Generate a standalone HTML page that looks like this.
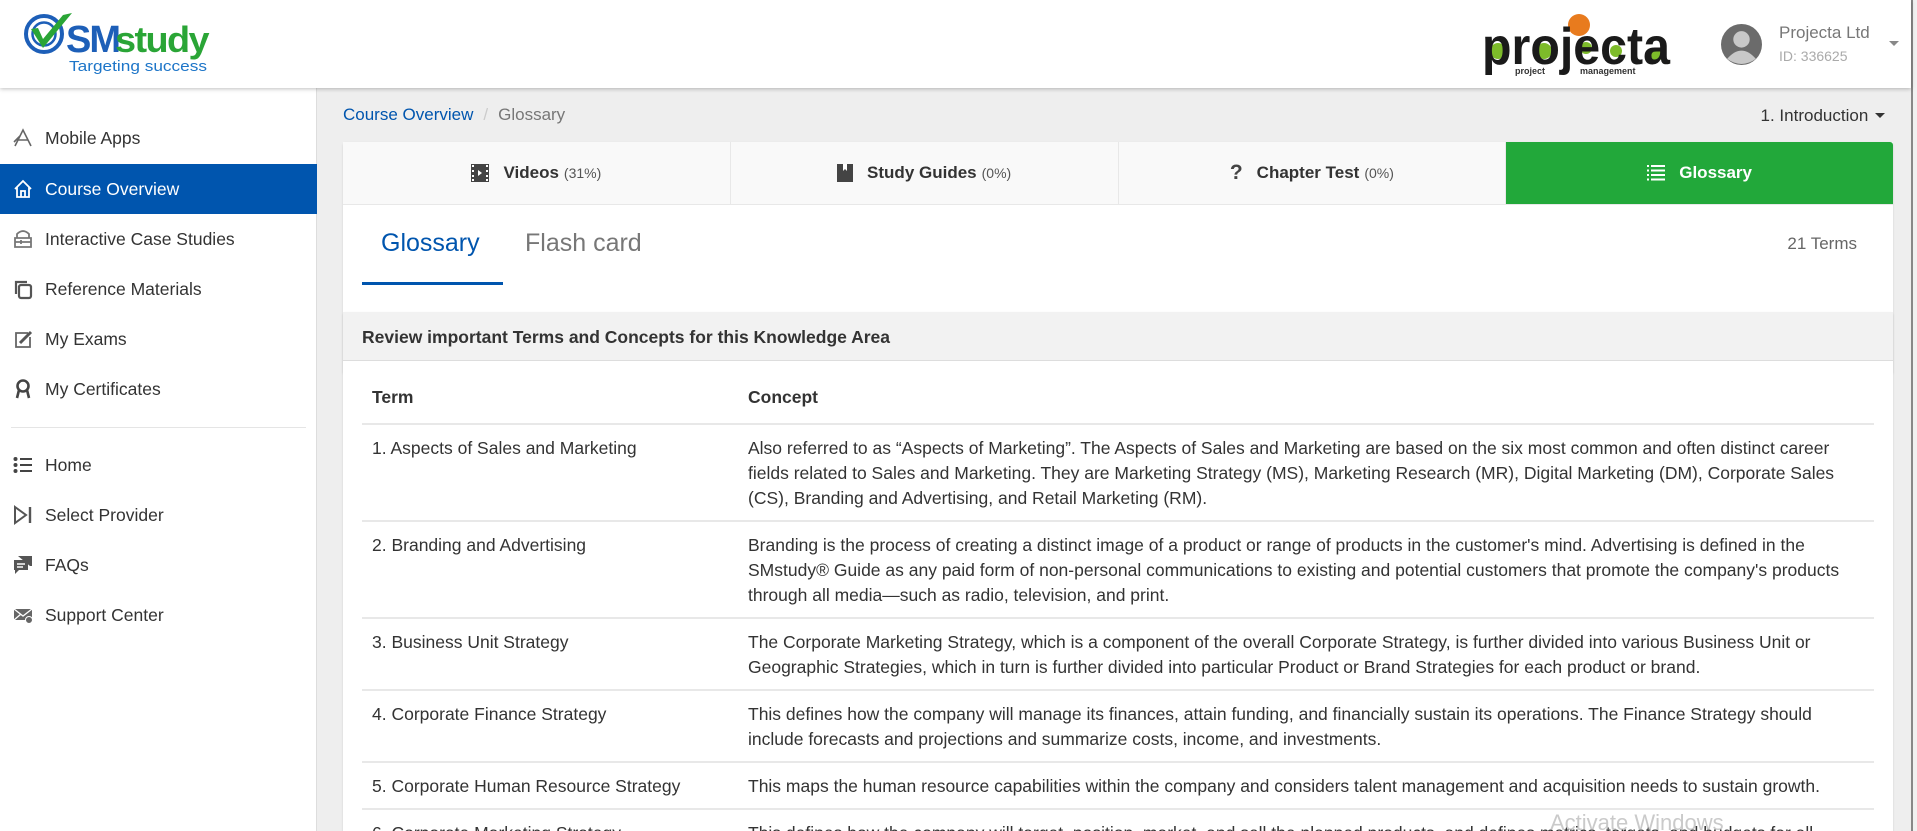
<!DOCTYPE html>
<html style="width:1917px;height:831px;overflow:hidden"><head><meta charset="utf-8"><style>
*{box-sizing:border-box;margin:0;padding:0}
body{width:1917px;height:831px;overflow:hidden;font-family:"Liberation Sans",Arial,sans-serif;background:#eee;color:#333;position:relative}
#wrap{position:absolute;left:0;top:0;width:1917px;height:831px;overflow:hidden}
.hdr{position:absolute;left:0;top:0;width:1911px;height:88px;background:#fff;box-shadow:0 1px 4px rgba(0,0,0,.25);z-index:3}
.side{position:absolute;left:0;top:88px;width:317px;height:743px;background:#fff;border-right:1px solid #ddd}
.side .it{position:absolute;left:0;width:317px;height:50px;display:flex;align-items:center;font-size:17.5px;color:#333}
.side .it svg{position:absolute;left:12px;width:22px;height:22px}
.side .it span{position:absolute;left:45px}
.side .act{background:#0055ae;color:#fff}
.main{position:absolute;left:318px;top:88px;width:1593px;height:743px;overflow:hidden}
.scroll{position:absolute;right:0;top:0;width:6px;height:831px;background:#f1f1f1;border-left:2px solid #888}
.card{position:absolute;left:25px;width:1550px;background:#fff;box-shadow:0 1px 2px rgba(0,0,0,.12);border-radius:3px}
.tabs{display:flex;height:63px;background:#f9f9f9;border-bottom:1px solid #e8e8e8}
.tab{flex:1;display:flex;align-items:center;justify-content:center;font-size:17px;font-weight:bold;color:#333;border-right:1px solid #e8e8e8}
.tab small{font-weight:normal;font-size:14px;color:#555;margin-left:5px}
.tab svg{margin-right:14px}
.tab.g{background:#22a83a;color:#fff;border:none;border-radius:0 3px 0 0}
td{vertical-align:top;font-size:17.5px;line-height:25px;color:#333;padding:11px 10px 9px}
table{border-collapse:collapse;width:1512px;margin-left:19px}
tr+tr td{border-top:2px solid #e8e8e8}
</style></head><body><div id="wrap">
<div class="hdr">
 <svg style="position:absolute;left:22px;top:10px" width="200" height="66" viewBox="0 0 200 66">
  <circle cx="22" cy="24" r="18" fill="none" stroke="#1d5fb8" stroke-width="4"/>
  <circle cx="22" cy="24" r="11.5" fill="none" stroke="#1d5fb8" stroke-width="2.5"/>
  <path d="M9 19 L21 38 L50 3 L41 5 L21 29 L16 18Z" fill="#2aa536"/>
  <text x="44" y="42" font-family="Liberation Sans" font-weight="bold" font-size="38" fill="#1d5fb8" letter-spacing="-2">SM</text>
  <text x="93" y="42" font-family="Liberation Sans" font-weight="bold" font-size="36" fill="#2aa536" letter-spacing="-1.5" textLength="93" lengthAdjust="spacingAndGlyphs">study</text>
  <text x="47" y="61" font-family="Liberation Sans" font-size="15" fill="#1d75c8" textLength="138" lengthAdjust="spacingAndGlyphs">Targeting success</text>
 </svg>
 <svg style="position:absolute;left:1480px;top:10px" width="200" height="66" viewBox="0 0 200 66">
  <circle cx="18" cy="41" r="8" fill="#7dbb2a"/>
  <circle cx="64" cy="41" r="8" fill="#7dbb2a"/>
  <circle cx="106" cy="38" r="6" fill="#7dbb2a"/>
  <circle cx="136" cy="41" r="6" fill="#7dbb2a"/>
  <circle cx="177" cy="45" r="6" fill="#7dbb2a"/>
  <circle cx="99" cy="15" r="11" fill="#e87b1e"/>
  <text x="2" y="54" font-family="Liberation Sans" font-weight="bold" font-size="52" fill="#1a1a1a" textLength="188" lengthAdjust="spacingAndGlyphs">projecta</text>
  <text x="35" y="64" font-family="Liberation Sans" font-weight="bold" font-size="9" fill="#333">project</text>
  <text x="100" y="64" font-family="Liberation Sans" font-weight="bold" font-size="9" fill="#333">management</text>
 </svg>
 <svg style="position:absolute;left:1721px;top:24px" width="41" height="41" viewBox="0 0 40 40"><circle cx="20" cy="20" r="20" fill="#6b6b6b"/><circle cx="20" cy="15" r="8" fill="#c8c8c8"/><path d="M6 34 Q20 18 34 34 Q20 44 6 34Z" fill="#c8c8c8"/></svg>
 <div style="position:absolute;left:1779px;top:23px;font-size:17px;color:#777">Projecta Ltd</div>
 <div style="position:absolute;left:1779px;top:48px;font-size:14px;color:#aaa">ID: 336625</div>
 <div style="position:absolute;left:1889px;top:41px;border:5px solid transparent;border-top-color:#888"></div>
</div>
<div class="side">
 <div class="it" style="top:25px"><svg viewBox="0 0 22 22"><path d="M3 19 L11 3 L19 19 M6 13 H16 M2 15 L8 9" stroke="#666" stroke-width="1.6" fill="none"/></svg><span>Mobile Apps</span></div>
 <div class="it act" style="top:76px"><svg viewBox="0 0 22 22"><path d="M3 11 L11 3 L19 11 M5 9 V19 H17 V9 M9 19 V13 H13 V19" stroke="#fff" stroke-width="1.8" fill="none"/></svg><span>Course Overview</span></div>
 <div class="it" style="top:126px"><svg viewBox="0 0 22 22"><path d="M5 10 V6 Q11 0 17 6 V10 M3 10 H19 V19 H3Z M3 14 H19 M9 12 V16" stroke="#777" stroke-width="1.8" fill="none"/></svg><span>Interactive Case Studies</span></div>
 <div class="it" style="top:176px"><svg viewBox="0 0 22 22"><rect x="7" y="7" width="12" height="13" rx="2" stroke="#555" stroke-width="2.2" fill="none"/><path d="M4 16 V4 H15" stroke="#555" stroke-width="2.2" fill="none"/></svg><span>Reference Materials</span></div>
 <div class="it" style="top:226px"><svg viewBox="0 0 22 22"><path d="M16 5 H4 V19 H18 V9" stroke="#666" stroke-width="1.8" fill="none"/><path d="M8 15 L19 4" stroke="#555" stroke-width="3"/></svg><span>My Exams</span></div>
 <div class="it" style="top:276px"><svg viewBox="0 0 22 22"><circle cx="11" cy="8" r="5.5" stroke="#444" stroke-width="2.6" fill="none"/><path d="M7 12 L5 20 M15 12 L17 20" stroke="#444" stroke-width="2.6"/></svg><span>My Certificates</span></div>
 <div style="position:absolute;left:11px;top:339px;width:295px;height:1px;background:#e5e5e5"></div>
 <div class="it" style="top:352px"><svg viewBox="0 0 22 22"><path d="M8 5 H20 M8 11 H20 M8 17 H20" stroke="#444" stroke-width="2"/><circle cx="3.5" cy="5" r="2" fill="#444"/><circle cx="3.5" cy="11" r="2" fill="#444"/><circle cx="3.5" cy="17" r="2" fill="#444"/></svg><span>Home</span></div>
 <div class="it" style="top:402px"><svg viewBox="0 0 22 22"><path d="M3 3 L14 11 L3 19Z" stroke="#555" stroke-width="2" fill="none"/><path d="M18 3 V19" stroke="#555" stroke-width="2.4"/></svg><span>Select Provider</span></div>
 <div class="it" style="top:452px"><svg viewBox="0 0 22 22"><path d="M6 2 H20 V12 H18 M2 6 H16 V16 H7 L3 20 V16 H2Z" fill="#555"/><path d="M5 10 H13 M5 13 H11" stroke="#fff" stroke-width="1.5"/></svg><span>FAQs</span></div>
 <div class="it" style="top:502px"><svg viewBox="0 0 22 22"><path d="M2 5 H20 V16 H2Z" fill="#666"/><path d="M2 5 L11 12 L20 5 M2 16 L9 10" stroke="#fff" stroke-width="1.3" fill="none"/><circle cx="17" cy="16" r="3.5" fill="#666" stroke="#fff"/></svg><span>Support Center</span></div>
</div>
<div class="main">
 <div style="position:absolute;left:25px;top:17px;font-size:17px"><span style="color:#0055ae">Course Overview</span><span style="color:#ccc;margin:0 10px">/</span><span style="color:#777">Glossary</span></div>
 <div style="position:absolute;right:26px;top:18px;font-size:17px;color:#333">1. Introduction <span style="display:inline-block;border:5px solid transparent;border-top-color:#333;vertical-align:-2px;margin-left:2px"></span></div>
 <div class="card" style="top:54px;height:232px">
  <div class="tabs">
   <div class="tab"><svg width="18" height="18" viewBox="0 0 18 18"><rect width="18" height="18" fill="#444"/><path d="M1 1h2v2H1zM1 6h2v2H1zM1 11h2v2H1zM1 15h2v2H1zM15 1h2v2h-2zM15 6h2v2h-2zM15 11h2v2h-2zM15 15h2v2h-2z" fill="#fff"/><path d="M7 6 L11 9 L7 12Z" fill="#fff"/></svg>Videos<small>(31%)</small></div>
   <div class="tab"><svg width="16" height="19" viewBox="0 0 16 19"><path d="M0 0 H16 V16 H0Z" fill="#444"/><path d="M0 17 H16" stroke="#444" stroke-width="2"/><path d="M6 0 V7 L8 5 L10 7 V0" fill="#fff"/></svg>Study Guides<small>(0%)</small></div>
   <div class="tab"><span style="font-size:21px;margin-right:14px;color:#444">?</span>Chapter Test<small>(0%)</small></div>
   <div class="tab g"><svg width="18" height="16" viewBox="0 0 18 16"><path d="M4 1 H18 M4 5.5 H18 M4 10 H18 M4 14.5 H18" stroke="#fff" stroke-width="2"/><path d="M0 1h2M0 5.5h2M0 10h2M0 14.5h2" stroke="#fff" stroke-width="2"/></svg>Glossary</div>
  </div>
  <div style="position:absolute;left:38px;top:87px;font-size:25px;color:#0055ae">Glossary</div>
  <div style="position:absolute;left:19px;top:140px;width:141px;height:3px;background:#0055ae"></div>
  <div style="position:absolute;left:182px;top:87px;font-size:25px;color:#777">Flash card</div>
  <div style="position:absolute;right:36px;top:92px;font-size:17px;color:#666">21 Terms</div>
 </div>
 <div class="card" style="top:224px;height:540px">
  <div style="height:49px;background:#f2f2f2;border-bottom:1px solid #ddd;padding:15px 19px;font-size:17.5px;font-weight:bold;color:#333">Review important Terms and Concepts for this Knowledge Area</div>
  <table style="margin-top:15px">
   <tr><td style="width:376px;font-weight:bold;padding:9px 10px 13px">Term</td><td style="font-weight:bold;padding:9px 10px 13px">Concept</td></tr>
   <tr><td>1. Aspects of Sales and Marketing</td><td>Also referred to as “Aspects of Marketing”. The Aspects of Sales and Marketing are based on the six most common and often distinct career<br>fields related to Sales and Marketing. They are Marketing Strategy (MS), Marketing Research (MR), Digital Marketing (DM), Corporate Sales<br>(CS), Branding and Advertising, and Retail Marketing (RM).</td></tr>
   <tr><td>2. Branding and Advertising</td><td>Branding is the process of creating a distinct image of a product or range of products in the customer's mind. Advertising is defined in the<br>SMstudy® Guide as any paid form of non-personal communications to existing and potential customers that promote the company's products<br>through all media—such as radio, television, and print.</td></tr>
   <tr><td>3. Business Unit Strategy</td><td>The Corporate Marketing Strategy, which is a component of the overall Corporate Strategy, is further divided into various Business Unit or<br>Geographic Strategies, which in turn is further divided into particular Product or Brand Strategies for each product or brand.</td></tr>
   <tr><td>4. Corporate Finance Strategy</td><td>This defines how the company will manage its finances, attain funding, and financially sustain its operations. The Finance Strategy should<br>include forecasts and projections and summarize costs, income, and investments.</td></tr>
   <tr><td>5. Corporate Human Resource Strategy</td><td>This maps the human resource capabilities within the company and considers talent management and acquisition needs to sustain growth.</td></tr>
   <tr><td>6. Corporate Marketing Strategy</td><td>This defines how the company will target, position, market, and sell the planned products, and defines metrics, targets, and budgets for all</td></tr>
  </table>
 </div>
 <div style="position:absolute;left:1232px;top:722px;font-size:22px;color:rgba(150,150,150,.5)">Activate Windows</div>
</div>
<div class="scroll"></div>
</div></body></html>
